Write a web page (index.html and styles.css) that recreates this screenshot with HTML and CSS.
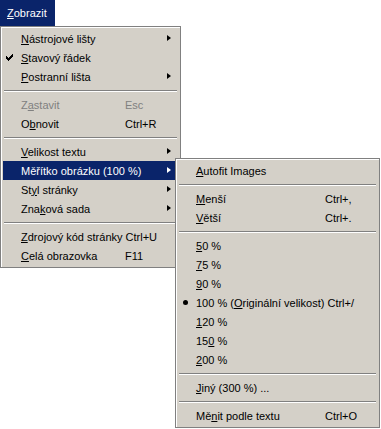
FILE: index.html
```html
<!DOCTYPE html>
<html lang="cs">
<head>
    <meta charset="UTF-8">
    <title>Zobrazit</title>
    <link rel="stylesheet" href="styles.css">
</head>
<body>
    <div class="menubar-item">
        <span><u>Z</u>obrazit</span>
    </div>
    <ul class="menu main-menu">
        <li class="item has-sub"><span class="label"><u>N</u>ástrojové lišty</span><i class="arrow"></i></li>
        <li class="item checked">
            <svg class="check" width="7" height="7" viewBox="0 0 7 7"><path d="M0 2h1v1h1v1h1V3h1V2h1V1h1V0h1v3H6v1H5v1H4v1H3v1H2V6H1V5H0z" fill="#000"/></svg>
            <span class="label"><u>S</u>tavový řádek</span>
        </li>
        <li class="item has-sub"><span class="label"><u>P</u>ostranní lišta</span><i class="arrow"></i></li>
        <li class="sep"></li>
        <li class="item disabled"><span class="label">Z<u>a</u>stavit</span><span class="key">Esc</span></li>
        <li class="item"><span class="label">O<u>b</u>novit</span><span class="key">Ctrl+R</span></li>
        <li class="sep"></li>
        <li class="item has-sub"><span class="label"><u>V</u>elikost textu</span><i class="arrow"></i></li>
        <li class="item has-sub active">
            <span class="label">Měřítko obrázku (100 %)</span><i class="arrow"></i>
            <ul class="menu sub-menu">
                <li class="item"><span class="label"><u>A</u>utofit Images</span></li>
                <li class="sep"></li>
                <li class="item"><span class="label"><u>M</u>enší</span><span class="key">Ctrl+,</span></li>
                <li class="item"><span class="label"><u>V</u>ětší</span><span class="key">Ctrl+.</span></li>
                <li class="sep"></li>
                <li class="item"><span class="label"><u>5</u>0 %</span></li>
                <li class="item"><span class="label"><u>7</u>5 %</span></li>
                <li class="item"><span class="label"><u>9</u>0 %</span></li>
                <li class="item"><i class="bullet"></i><span class="label wide">100 % (<u>O</u>riginální velikost) Ctrl+/</span></li>
                <li class="item"><span class="label"><u>1</u>20 %</span></li>
                <li class="item"><span class="label">15<u>0</u> %</span></li>
                <li class="item"><span class="label"><u>2</u>00 %</span></li>
                <li class="sep"></li>
                <li class="item"><span class="label"><u>J</u>iný (300 %) ...</span></li>
                <li class="sep"></li>
                <li class="item"><span class="label">Mě<u>n</u>it podle textu</span><span class="key">Ctrl+O</span></li>
            </ul>
        </li>
        <li class="item has-sub"><span class="label">St<u>y</u>l stránky</span><i class="arrow"></i></li>
        <li class="item has-sub"><span class="label">Zna<u>k</u>ová sada</span><i class="arrow"></i></li>
        <li class="sep"></li>
        <li class="item"><span class="label wide"><u>Z</u>drojový kód stránky Ctrl+U</span></li>
        <li class="item"><span class="label"><u>C</u>elá obrazovka</span><span class="key">F11</span></li>
    </ul>
</body>
</html>
```

FILE: styles.css
```css
html, body {
    height: 100%;
}
body {
    margin: 0;
    min-height: 429px;
    background: #fff;
    font-family: 'Liberation Sans', Arial, sans-serif;
    font-size: 11px;
    color: #000;
}
u {
    text-decoration: underline;
    text-underline-offset: 1px;
}
.menubar-item {
    width: 55px;
    height: 26px;
    background: #0a246a;
    color: #fff;
    display: flex;
    align-items: center;
    padding-left: 7px;
    box-sizing: border-box;
}
.menu {
    list-style: none;
    margin: 0;
    padding: 2px;
    background: #d4d0c8;
    border: 1px solid #808080;
    box-shadow: inset 1px 1px #fff;
    box-sizing: border-box;
}
.main-menu {
    width: 181px;
}
.item {
    position: relative;
    height: 19px;
    display: flex;
    align-items: center;
    padding-left: 18px;
    white-space: nowrap;
}
.main-menu .label {
    min-width: 104px;
}
.sub-menu .label {
    min-width: 129px;
}
.main-menu .label.wide,
.sub-menu .label.wide {
    min-width: 0;
}
.disabled {
    color: #808080;
}
.sep {
    margin: 4px 1px 3px;
    border-top: 1px solid #808080;
    border-bottom: 1px solid #fff;
}
.arrow {
    position: absolute;
    right: 7px;
    top: 6px;
    width: 0;
    height: 0;
    border-top: 3.5px solid transparent;
    border-bottom: 3.5px solid transparent;
    border-left: 4px solid #000;
}
.check {
    position: absolute;
    left: 3px;
    top: 6px;
}
.bullet {
    position: absolute;
    left: 5px;
    top: 7px;
    width: 5px;
    height: 5px;
    border-radius: 50%;
    background: #000;
}
.item.active {
    background: #0a246a;
    color: #fff;
}
.item.active > .arrow {
    border-left-color: #fff;
}
.sub-menu {
    position: absolute;
    left: 172px;
    top: -3px;
    width: 205px;
    color: #000;
    z-index: 1;
}
```
